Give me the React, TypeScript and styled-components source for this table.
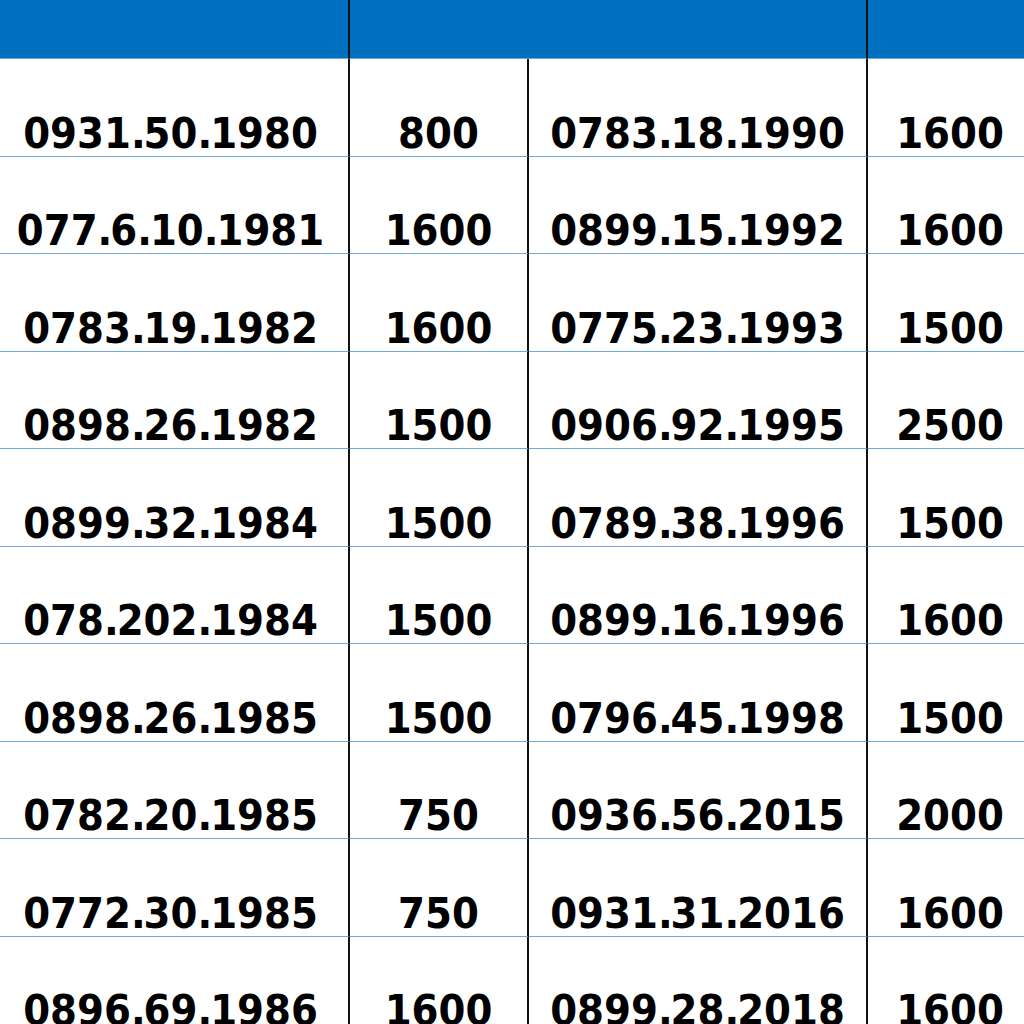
import React from "react";
import styled, { createGlobalStyle } from "styled-components";

const GlobalStyle = createGlobalStyle`
  html, body {
    margin: 0;
    padding: 0;
    background: #ffffff;
    overflow: hidden;
  }
  body {
    font-family: "DejaVu Sans Condensed", "DejaVu Sans", Verdana, sans-serif;
  }
`;

const rows: [string, string, string, string][] = [
  ["0931.50.1980", "800", "0783.18.1990", "1600"],
  ["077.6.10.1981", "1600", "0899.15.1992", "1600"],
  ["0783.19.1982", "1600", "0775.23.1993", "1500"],
  ["0898.26.1982", "1500", "0906.92.1995", "2500"],
  ["0899.32.1984", "1500", "0789.38.1996", "1500"],
  ["078.202.1984", "1500", "0899.16.1996", "1600"],
  ["0898.26.1985", "1500", "0796.45.1998", "1500"],
  ["0782.20.1985", "750", "0936.56.2015", "2000"],
  ["0772.30.1985", "750", "0931.31.2016", "1600"],
  ["0896.69.1986", "1600", "0899.28.2018", "1600"],
];

const Sheet = styled.div`
  display: grid;
  grid-template-columns: 350px 179px 339px 164px;
  grid-template-rows: 59px;
  grid-auto-rows: 97.5px;
  width: 1032px;
`;

const HeadCell = styled.div<{ $span?: number; $last?: boolean }>`
  grid-column: span ${(p) => p.$span || 1};
  box-sizing: border-box;
  background: #0070c0;
  border-bottom: 1px solid #6fa8dc;
  border-right: ${(p) => (p.$last ? "none" : "2px solid #111")};
`;

const Cell = styled.div<{ $last?: boolean; $shift?: number }>`
  box-sizing: border-box;
  display: flex;
  align-items: flex-end;
  justify-content: center;
  padding-right: ${(p) => p.$shift || 0}px;
  border-bottom: 1px solid #6fa8dc;
  border-right: ${(p) => (p.$last ? "none" : "2px solid #111")};
`;

const Value = styled.span`
  font-family: "DejaVu Sans Condensed", "DejaVu Sans", Verdana, sans-serif;
  font-stretch: condensed;
  font-weight: bold;
  font-size: 43px;
  line-height: 1.2;
  margin-bottom: -4px;
  color: #000;
  white-space: nowrap;
`;

const Dot = styled.span`
  letter-spacing: -2px;
`;

function Num({ text }: { text: string }) {
  const parts = text.split(".");
  return (
    <Value>
      {parts.map((p, i) => (
        <React.Fragment key={i}>
          {p}
          {i < parts.length - 1 && <Dot>.</Dot>}
        </React.Fragment>
      ))}
    </Value>
  );
}

function App() {
  return (
    <>
      <GlobalStyle />
      <Sheet>
        <HeadCell />
        <HeadCell $span={2} />
        <HeadCell $last />
        {rows.map((r, i) => (
          <React.Fragment key={i}>
            <Cell $shift={7}>
              <Num text={r[0]} />
            </Cell>
            <Cell>
              <Num text={r[1]} />
            </Cell>
            <Cell>
              <Num text={r[2]} />
            </Cell>
            <Cell $last>
              <Num text={r[3]} />
            </Cell>
          </React.Fragment>
        ))}
      </Sheet>
    </>
  );
}

export default App;
